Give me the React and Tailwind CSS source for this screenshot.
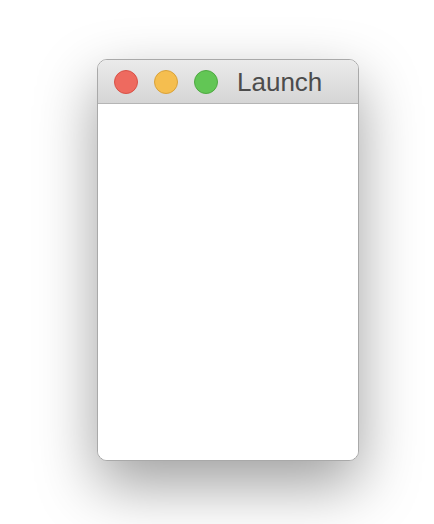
export default function App() {
  return (
    <div className="w-[434px] h-[524px] bg-white pl-[97px] pt-[59px] overflow-hidden" style={{ fontFamily: '"Liberation Sans", Arial, sans-serif' }}>
      <div className="w-[262px] h-[402px] rounded-[10px] border border-[#a9a9a9] bg-white overflow-hidden shadow-[0_24px_60px_0px_rgba(0,0,0,0.38)] flex flex-col">
        <div className="h-[44px] flex items-center gap-4 pl-[16px] bg-gradient-to-b from-[#ebebeb] to-[#d5d5d5] border-b border-[#b5b5b5]">
          <div className="w-[24px] h-[24px] rounded-full bg-[#ee6a5f] border border-[#d85247]" />
          <div className="w-[24px] h-[24px] rounded-full bg-[#f5be4f] border border-[#d9a23a]" />
          <div className="w-[24px] h-[24px] rounded-full bg-[#62c655] border border-[#4fa942]" />
          <span className="ml-[3px] text-[26px] leading-none text-[#4c4c4c]">Launch</span>
        </div>
        <div className="flex-1 bg-white" />
      </div>
    </div>
  );
}
